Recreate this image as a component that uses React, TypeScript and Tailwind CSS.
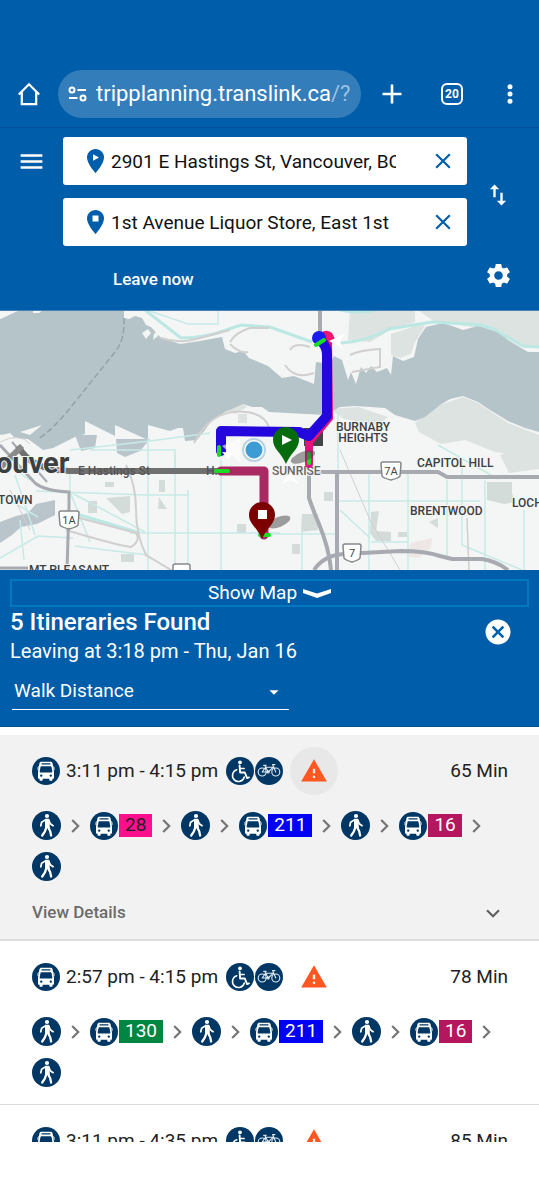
import React from 'react';
import { MdArrowDropDown, MdCancel, MdClose, MdMenu, MdSettings, MdSwapVert, MdWarning } from 'react-icons/md';

interface Leg {
  mode: 'walk' | 'bus';
  route?: string;
  color?: string;
}

interface Itinerary {
  id: number;
  time: string;
  duration: string;
  selected?: boolean;
  legs: Leg[];
}

const PINK = 'bg-[#ff0f8b] text-[#222]';
const BLUE = 'bg-[#0000f5] text-white';
const CRIMSON = 'bg-[#b5175e] text-white';
const GREEN = 'bg-[#008542] text-white';

const itineraries: Itinerary[] = [
  {
    id: 1,
    time: '3:11 pm - 4:15 pm',
    duration: '65 Min',
    selected: true,
    legs: [
      { mode: 'walk' },
      { mode: 'bus', route: '28', color: PINK },
      { mode: 'walk' },
      { mode: 'bus', route: '211', color: BLUE },
      { mode: 'walk' },
      { mode: 'bus', route: '16', color: CRIMSON },
      { mode: 'walk' },
    ],
  },
  {
    id: 2,
    time: '2:57 pm - 4:15 pm',
    duration: '78 Min',
    legs: [
      { mode: 'walk' },
      { mode: 'bus', route: '130', color: GREEN },
      { mode: 'walk' },
      { mode: 'bus', route: '211', color: BLUE },
      { mode: 'walk' },
      { mode: 'bus', route: '16', color: CRIMSON },
      { mode: 'walk' },
    ],
  },
  { id: 3, time: '3:11 pm - 4:35 pm', duration: '85 Min', legs: [] },
];

const BusIcon = () => (
  <svg viewBox="0 0 28 28" className="h-7 w-7 flex-none" aria-hidden="true">
    <circle cx="14" cy="14" r="14" fill="#003764" />
    <path d="M9.5 4.8h9c1.2 0 1.9.6 2.1 1.7l1.4 8.2v6.1c0 .6-.3.9-.9.9h-.6v1c0 .7-.5 1.1-1.1 1.1h-1c-.6 0-1.1-.4-1.1-1.1v-1h-6.6v1c0 .7-.5 1.1-1.1 1.1h-1c-.6 0-1.1-.4-1.1-1.1v-1h-.6c-.6 0-.9-.3-.9-.9v-6.1l1.4-8.2c.2-1.1.9-1.7 2.1-1.7z" fill="#fff" />
    <path d="M9.4 9.2h9.2c.5 0 .8.2.9.7l.8 4.6c.1.6-.2.9-.7.9H8.4c-.5 0-.8-.3-.7-.9l.8-4.6c.1-.5.4-.7.9-.7z" fill="#003764" />
    <path d="M10 6.8h8" stroke="#003764" strokeWidth="1.3" strokeLinecap="round" />
    <path d="M6.8 9.5l-.8.6v3M21.2 9.5l.8.6v3" stroke="#fff" strokeWidth=".9" fill="none" />
    <circle cx="9.2" cy="18.6" r="1.2" fill="#003764" />
    <circle cx="18.8" cy="18.6" r="1.2" fill="#003764" />
  </svg>
);

const WalkIcon = () => (
  <svg viewBox="0 0 29 29" className="h-[29px] w-[29px] flex-none" aria-hidden="true">
    <circle cx="14.5" cy="14.5" r="14.5" fill="#003764" />
    <circle cx="15" cy="5" r="2.1" fill="#fff" />
    <path d="M13 7.8h3.3c.8 0 1.2.4 1.3 1.1l.2 8.1h-4.8z" fill="#fff" />
    <g fill="none" stroke="#fff" strokeLinecap="round" strokeLinejoin="round">
      <path d="M13.4 8.9l-3.8 2.4-.8 3.5" strokeWidth="1.7" />
      <path d="M16.8 9.3l1.5 3.4 2.8 2" strokeWidth="1.7" />
      <path d="M14.3 16.5l-1.5 4.2-2.6 3.8" strokeWidth="2.3" />
      <path d="M16.3 16.5l1.9 3.8.9 4.2" strokeWidth="2.3" />
    </g>
  </svg>
);

const WheelchairIcon = () => (
  <svg viewBox="0 0 28 28" className="h-7 w-7 flex-none" aria-hidden="true">
    <circle cx="14" cy="14" r="14" fill="#003764" />
    <circle cx="14" cy="5.3" r="1.9" fill="#fff" />
    <g fill="none" stroke="#fff" strokeLinecap="round" strokeLinejoin="round">
      <path d="M13.6 8.5l.5 7h4.7l2.3 5.6 1.9-.7" strokeWidth="1.9" />
      <path d="M14.2 11.6h4" strokeWidth="1.5" />
      <path d="M10.8 12.8a6 6 0 1 0 7.5 7.2" strokeWidth="1.5" />
    </g>
  </svg>
);

const BikeIcon = () => (
  <svg viewBox="0 0 28 28" className="h-7 w-7 flex-none" aria-hidden="true">
    <circle cx="14" cy="14" r="14" fill="#003764" />
    <g fill="none" stroke="#e4ecf2" strokeWidth="1.1" strokeLinecap="round" strokeLinejoin="round">
      <circle cx="7.2" cy="15" r="4" />
      <circle cx="20.8" cy="15" r="4" />
      <path d="M7.2 15l3.3-4.8h7.9L13.2 15zM9.7 8.3l3.5 6.7M20.8 15L17.6 7.6h2.3M8.5 8.3h2.8" />
      <circle cx="13.2" cy="15" r="1" />
    </g>
  </svg>
);

const PinIcon = ({ stop }: { stop?: boolean }) => (
  <svg viewBox="0 0 17 24" className="h-6 w-[17px] flex-none" aria-hidden="true">
    <path d="M8.5 0C3.8 0 0 3.7 0 8.4 0 14.7 8.5 24 8.5 24S17 14.7 17 8.4C17 3.7 13.2 0 8.5 0z" fill="#005daa" />
    {stop ? <path d="M5.5 5.5h6v6h-6z" fill="#fff" /> : <path d="M6 5.3l6 3.2-6 3.2z" fill="#fff" />}
  </svg>
);

const BrowserBar = () => (
  <div className="flex h-[69px] flex-none items-center border-b border-[#00529a] pt-px">
    <button aria-label="Home" className="flex w-[58px] flex-none justify-center">
      <svg viewBox="0 0 24 24" className="h-6 w-6" fill="none" stroke="#fff" strokeWidth="2.2">
        <path d="M1.8 12.5L12 2.2l10.2 10.3M4.8 10v12.2h14.4V10" />
      </svg>
    </button>
    <div className="flex h-12 min-w-0 flex-1 items-center rounded-full bg-[#337dbb] pl-[10px]">
      <svg viewBox="0 0 20 16" className="h-4 w-5 flex-none" fill="none" stroke="#fff" strokeWidth="2" aria-hidden="true">
        <circle cx="4" cy="4" r="2.5" />
        <path d="M9.5 4H18M1 12h8.5" />
        <circle cx="15" cy="12" r="2.5" />
      </svg>
      <span className="ml-2 truncate text-[22px] text-white">
        tripplanning.translink.ca<span className="text-[#9dc1e0]">/?</span>
      </span>
    </div>
    <button aria-label="New tab" className="flex w-[62px] flex-none justify-center">
      <svg viewBox="0 0 20 20" className="h-5 w-5" stroke="#fff" strokeWidth="2.6">
        <path d="M10 .5v19M.5 10h19" />
      </svg>
    </button>
    <button aria-label="Tabs" className="flex w-[58px] flex-none justify-center">
      <span className="flex h-[22px] w-[22px] items-center justify-center rounded-[6px] border-2 border-white text-xs font-bold text-white">
        20
      </span>
    </button>
    <button aria-label="More" className="flex w-[58px] flex-none justify-center">
      <svg viewBox="0 0 6 20" className="h-5 w-[6px]" fill="#fff">
        <circle cx="3" cy="2.7" r="2.5" />
        <circle cx="3" cy="10" r="2.5" />
        <circle cx="3" cy="17.3" r="2.5" />
      </svg>
    </button>
  </div>
);

const LocationField = ({ label, value, stop }: { label: string; value: string; stop?: boolean }) => (
  <div className="flex h-12 items-center rounded-[3px] bg-white pl-6">
    <PinIcon stop={stop} />
    <input
      aria-label={label}
      defaultValue={value}
      className="ml-[7px] mr-[23px] h-full min-w-0 flex-1 bg-transparent text-[19px] text-[#111] outline-none"
    />
    <button aria-label={`Clear ${label}`} className="flex w-12 flex-none justify-center text-[#005daa]">
      <MdClose size={26} />
    </button>
  </div>
);

const SearchPanel = () => (
  <header className="flex h-[182px] flex-none pt-[9px]">
    <div className="flex w-[63px] flex-none justify-center">
      <button aria-label="Menu" className="h-12 text-white">
        <MdMenu size={29} />
      </button>
    </div>
    <div className="min-w-0 flex-1">
      <div className="flex flex-col gap-[13px]">
        <LocationField label="Start" value="2901 E Hastings St, Vancouver, BC" />
        <LocationField label="Destination" value="1st Avenue Liquor Store, East 1st" stop />
      </div>
      <button className="ml-[50px] mt-5 text-[17px] leading-[26px] font-medium text-white">Leave now</button>
    </div>
    <div className="flex w-[72px] flex-none flex-col items-center gap-[52px] pt-11 pr-[10px] text-white">
      <button aria-label="Swap locations">
        <MdSwapVert size={28} />
      </button>
      <button aria-label="Settings">
        <MdSettings size={29} />
      </button>
    </div>
  </header>
);

const TripMap = () => (
  <svg
    viewBox="0 0 539 260"
    preserveAspectRatio="xMidYMid slice"
    className="h-[260px] w-full flex-none font-['Roboto','Liberation_Sans',sans-serif]"
    role="img"
    aria-label="Trip map"
  >
    <rect width="539" height="260" fill="#f4f5f5" />

    {/* parks */}
    <g fill="#dde3e0">
      <path d="M350 0h65v12l-25 8-20 12-22-2zM418 0h121v38h-14l-30-18-60-8z" />
      <path d="M391 24l30-10 4 2-10 16-4 12-11 4-9-3z" />
      <path d="M225 100l18-6 4 3-12 7zM238 104h9v9h-9z" />
      <path d="M415 113l25-18 23-8 15 6 30 20 31 12v14l-20 6-24-3-30-12-24 4-22-12z" />
      <path d="M500 145l39-16v30l-30 4zM330 99l28-2 30 10-10 8-34-6z" />
    </g>
    <g fill="#d3dcd9">
      <path d="M106 188l24-2v16l-8 2zM88 191h9v12h-9zM105 172h9v5h-9zM159 170h6v12h-6zM159 187l8 12h-9zM237 214h9v9h-9zM121 244h13v8h-13z" />
      <path d="M487 172h25v12l4 8-12 2-17-4zM302 204h16v16l-17 2zM324 182h9v9h-9zM371 202l8-1-3 20 15 1v9h-15l-6-8zM398 222h9v5h-9zM429 212l9-4v10zM292 234h8v10h-8z" />
    </g>
    <path d="M410 233l22-5-1 10-12 10-10-1z" fill="#eee7e5" />

    {/* inlet */}
    <path
      d="M20 0H124V8l5 1 6-3 7 2 4 7 5 2 9 10 8 3 12 4 20-3 22-4 3 12 10 4 8-2 6 7 19 8 14 12 12-2 20 8 2-22 14 2 4-8 8 4 6 20 3-8 5 12 5-17 5 6 5-7 6 6 10-4 4 7 2-19 10 5 11-4 4-18 8-12 17-4 12 4 8 3 15-4 20 6 10 8 20 12H539V122l-14-4-17-7-18-11-12-8-15-6-13 3-10 6-15 12-10 4-20-6-10-7-30-2-15 1-15 8-56-3-7-5h-10l-9-3-18 8-13 8-7 10-8 10-12 1-2-13h-5l-8 3-22-6v15l-33-15v11l-30-15v13l-8 2-24 12-10 2-15-11-13-1-5-5-8 2-8-2-18 5V71l8 0 3-16-11 4V4l16 10 4-3z"
      fill="#b5c4c9"
    />
    <path d="M142 23l6-4 3 4-5 6zM154 24l3-3 1 5-5 4zM20 122l22-7-12 10zM33 0h10l-4 3h-6z" fill="#f4f5f5" />
    <path d="M0 212l16-6 12-3 8-9 19-4v15l-18 9-16 3-9 8-12 8zM75 125h22l-2 13-14 3zM116 129h34l-10 12-15 6-8-4z" fill="#b9c5ca" />
    <path d="M124 8q1 22-9 34L75 92q-22 28-37 37" fill="none" stroke="#93a2a8" strokeWidth="1.5" strokeDasharray="6 3" />

    {/* local streets */}
    <g fill="none" stroke="#c6eae6" strokeWidth="1.5">
      <path d="M147 0l41 14h30V0M36 181l109 4h43M130 223h150M148 128v132M175 145v115M188 180v80M221 150v110M70 162v20l75 40M0 248l38-22 35 2" />
      <path d="M269 224h70M338 191h142M369 162v98M408 162v98M462 150v85l60 25M485 170v90M447 170v80M338 100v60M371 232h37M524 200v60M340 200l30 28M0 185l38 22M20 210l4 40M70 182l20 50M75 236l15 2 58 7M302 220v40" />
      <path d="M0 150l30 20M15 165l20 60M70 140l80-9 60-8M90 140h85v20M438 135l60 34" />
    </g>
    <g fill="none" stroke="#bce8e4" strokeWidth="3">
      <path d="M145 0l36 28q25 0 45-8l15-5 29 2 42 15M341 33q25-1 48-14l43-7 35 2q24 1 35 10l21 12 16 1M340 0q20 5 45-2" />
      <path d="M80 205l60 18" />
    </g>

    {/* rail and minor roads */}
    <g fill="none" stroke="#d2cfcf" strokeWidth="2">
      <path d="M161 28q18 6 35 1l34-9M230 32q6-10 20-14h19M230 34q10 10 18 8M290 40q5-8 20-3M285 55q10 15 29 8M350 45q10-5 30-6v18l-28 5" />
      <path d="M194 133q18-35 52-31 18 2 23 15M76 207l60 16q5 8-5 14-15-2-65-17M126 155q10 20 10 45 0 25 10 45l30 18" />
      <path d="M0 132q20-10 30 2M10 180l20 40M340 140l30 70 30 50" strokeWidth="1" />
      <path d="M467 208l2 52" strokeWidth="1.5" />
    </g>

    {/* highways */}
    <g fill="none" stroke="#a7abb1" strokeWidth="4">
      <path d="M309 160v28q4 12 10 26 10 24 12 46M337 160v100M318 162h120l9 5h92M314 260q10-15 30-16l56-3q26 0 40 5l12 3h30q14 2 26 11" />
      <path d="M0 135l35 38q10 8 34 9v14l-2 64" strokeWidth="3" />
      <path d="M12 132l35 40" strokeWidth="2" />
      <path d="M320 0v30" />
      <path d="M0 258h28" strokeWidth="3" />
    </g>

    {/* corridor west of the transfer */}
    <path d="M18 136q14 25 52 25h153" fill="none" stroke="#707070" strokeWidth="6" />
    <path d="M0 158l22-22" stroke="#8a8a8a" strokeWidth="6" />

    {/* place names */}
    <g fill="#3c3f42" fontSize="12" fontWeight="500" stroke="#f4f5f5" strokeWidth="2" paintOrder="stroke">
      <text x="-4" y="163" fontSize="29" fontWeight="700">ouver</text>
      <text x="78" y="165" fill="#555" stroke="none">E Hastings St</text>
      <text x="206" y="165" fill="#555" stroke="none">H.</text>
      <text x="-2" y="194">TOWN</text>
      <text x="29" y="264">MT PLEASANT</text>
      <text x="363" y="121" textAnchor="middle">BURNABY</text>
      <text x="363" y="132" textAnchor="middle">HEIGHTS</text>
      <text x="417" y="157">CAPITOL HILL</text>
      <text x="410" y="205">BRENTWOOD</text>
      <text x="512" y="197">LOCH</text>
      <text x="272" y="165" fill="#666">SUNRISE</text>
    </g>

    {/* highway shields */}
    <g fill="#fff" stroke="#85898d" strokeWidth="1.5">
      <path d="M61 201h16q2 0 2 2l-1 12q-1 2-9 4-8-2-9-4l-1-12q0-2 2-2z" />
      <path d="M383 152h16q2 0 2 2l-1 12q-1 2-9 4-8-2-9-4l-1-12q0-2 2-2z" />
      <path d="M345 234h14q2 0 2 2l-1 12q-1 2-8 4-7-2-8-4l-1-12q0-2 2-2z" />
      <path d="M175 254h13q2 0 2 2v8h-17v-8q0-2 2-2z" />
    </g>
    <g fill="#444" fontSize="11" textAnchor="middle">
      <text x="69" y="214">1A</text>
      <text x="391" y="165">7A</text>
      <text x="352" y="247">7</text>
    </g>

    {/* bus routes */}
    <g fill="none" strokeLinecap="round" strokeLinejoin="round">
      <path d="M304 118h19v18h-19z" fill="#444" stroke="none" />
      <path d="M328 32l1 76-20 24v22" stroke="#e5127d" strokeWidth="8" />
      <path d="M320 24q5-6 12-1l3 6-8 3z" fill="#ef1670" stroke="none" />
      <path d="M221 141v-20l78 1 10 4 18-20V45q0-9-7-15" stroke="#2407dd" strokeWidth="10" />
      <circle cx="319" cy="28" r="7" fill="#1b1bf0" />
      <path d="M221 161h43v64" stroke="#a92a63" strokeWidth="9" />
      <path d="M316 35l8-5M219 137v8M309 144v9M216 161h12M260 225h9" stroke="#19dc23" strokeWidth="4" />
    </g>
    <path d="M329 31l16-7-6 8 4 6zM222 142l12 1-6 6zM282 174l8-12 9 12-9-4z" fill="#fff" />
    <path d="M240 128l-18 8 18 16z" fill="#fff" opacity=".6" />

    {/* current position */}
    <circle cx="254" cy="140" r="12" fill="#b7d3e2" />
    <circle cx="254" cy="140" r="10" fill="#fff" />
    <circle cx="254" cy="140" r="8.5" fill="#3e9bd4" />

    {/* start and end pins */}
    <ellipse cx="303" cy="147" rx="13" ry="5" fill="#444" opacity=".5" transform="rotate(-22 303 147)" />
    <ellipse cx="279" cy="212" rx="12" ry="5" fill="#444" opacity=".5" transform="rotate(-22 279 212)" />
    <path d="M286 117c-7 0-13 5.5-13 13 0 9 8 12 13 24 5-12 13-15 13-24 0-7.5-6-13-13-13z" fill="#056b0c" />
    <path d="M282 125l10 5-10 5z" fill="#fff" />
    <path d="M262 192c-7 0-13 5.5-13 13 0 9 8 12 13 24 5-12 13-15 13-24 0-7.5-6-13-13-13z" fill="#7d0000" />
    <path d="M258 200h9v9h-9z" fill="#fff" />
    <path d="M0 .5h539" stroke="#4a82b5" />
  </svg>
);

const ResultsHeader = () => (
  <section className="flex-none border-b border-[#004f91] bg-[#005daa] px-[10px] pt-[9px] pb-4 text-white">
    <button className="flex h-7 w-full items-center justify-center gap-[6px] border-2 border-[#0079c1] text-[19px]">
      Show Map
      <svg viewBox="0 0 28 9" className="h-[9px] w-7" fill="#fff" aria-hidden="true">
        <path d="M0 0l14 4.5L28 0v4L14 9 0 4z" />
      </svg>
    </button>
    <div className="flex items-center justify-between pr-4">
      <div>
        <h1 className="text-2xl leading-[30px] font-medium">5 Itineraries Found</h1>
        <p className="text-[20px] leading-7">Leaving at 3:18 pm - Thu, Jan 16</p>
      </div>
      <button aria-label="Close results" className="mb-2">
        <MdCancel size={30} />
      </button>
    </div>
    <div className="relative ml-[2px] mt-2 w-[277px] border-b border-white">
      <select aria-label="Sort by" className="h-9 w-full appearance-none bg-transparent pl-[2px] text-[19px] outline-none">
        <option>Walk Distance</option>
      </select>
      <MdArrowDropDown size={22} className="pointer-events-none absolute top-2 right-1" />
    </div>
  </section>
);

const LegItem = ({ leg, last }: { leg: Leg; last: boolean }) => (
  <li className="flex h-[41px] items-center">
    {leg.mode === 'walk' ? <WalkIcon /> : <BusIcon />}
    {leg.route && <span className={`ml-px flex h-[23px] items-center px-[6px] text-[19px] ${leg.color}`}>{leg.route}</span>}
    {!last && (
      <span className="flex w-[29px] flex-none justify-center">
        <svg viewBox="0 0 9 14" className="h-[14px] w-[9px]" fill="none" stroke="#757575" strokeWidth="2.2" aria-hidden="true">
          <path d="M1.2 1l6 6-6 6" />
        </svg>
      </span>
    )}
  </li>
);

const ItineraryCard = ({ item }: { item: Itinerary }) => (
  <li className={`pl-8 pr-[31px] pt-3 ${item.selected ? 'border-b-2 border-[#dcdcdc] bg-[#f2f2f2]' : 'border-b border-[#dcdcdc] pb-[11px]'}`}>
    <div className="flex h-12 items-center text-[19px] text-[#222]">
      <BusIcon />
      <span className="ml-[6px] mr-2 whitespace-nowrap">{item.time}</span>
      <span className="flex gap-px">
        <WheelchairIcon />
        <BikeIcon />
      </span>
      <button
        aria-label="Service alert"
        className={`ml-[7px] flex h-12 w-12 flex-none items-center justify-center rounded-full text-[#ff5722] ${item.selected ? 'bg-[#e8e8e8]' : ''}`}
      >
        <MdWarning size={28} />
      </button>
      <span className="ml-auto whitespace-nowrap">{item.duration}</span>
    </div>
    <ul className="mt-[10px] flex flex-wrap">
      {item.legs.map((leg, i) => (
        <LegItem key={i} leg={leg} last={i === item.legs.length - 1} />
      ))}
    </ul>
    {item.selected && (
      <button className="flex h-[52px] w-full items-center justify-between pr-2 text-[17px] font-medium text-[#6b6b6b]">
        View Details
        <svg viewBox="0 0 14 9" className="h-[9px] w-[14px]" fill="none" stroke="#616161" strokeWidth="2.2" aria-hidden="true">
          <path d="M1 1.2l6 6 6-6" />
        </svg>
      </button>
    )}
  </li>
);

export default function App() {
  return (
    <div className="flex h-screen flex-col bg-white pb-[58px] font-['Roboto','Liberation_Sans',sans-serif]">
      <div className="flex-none bg-[#005daa] pt-[59px]">
        <BrowserBar />
        <SearchPanel />
      </div>
      <TripMap />
      <ResultsHeader />
      <ul className="min-h-0 flex-1 overflow-hidden pt-2">
        {itineraries.map((item) => (
          <ItineraryCard key={item.id} item={item} />
        ))}
      </ul>
    </div>
  );
}
